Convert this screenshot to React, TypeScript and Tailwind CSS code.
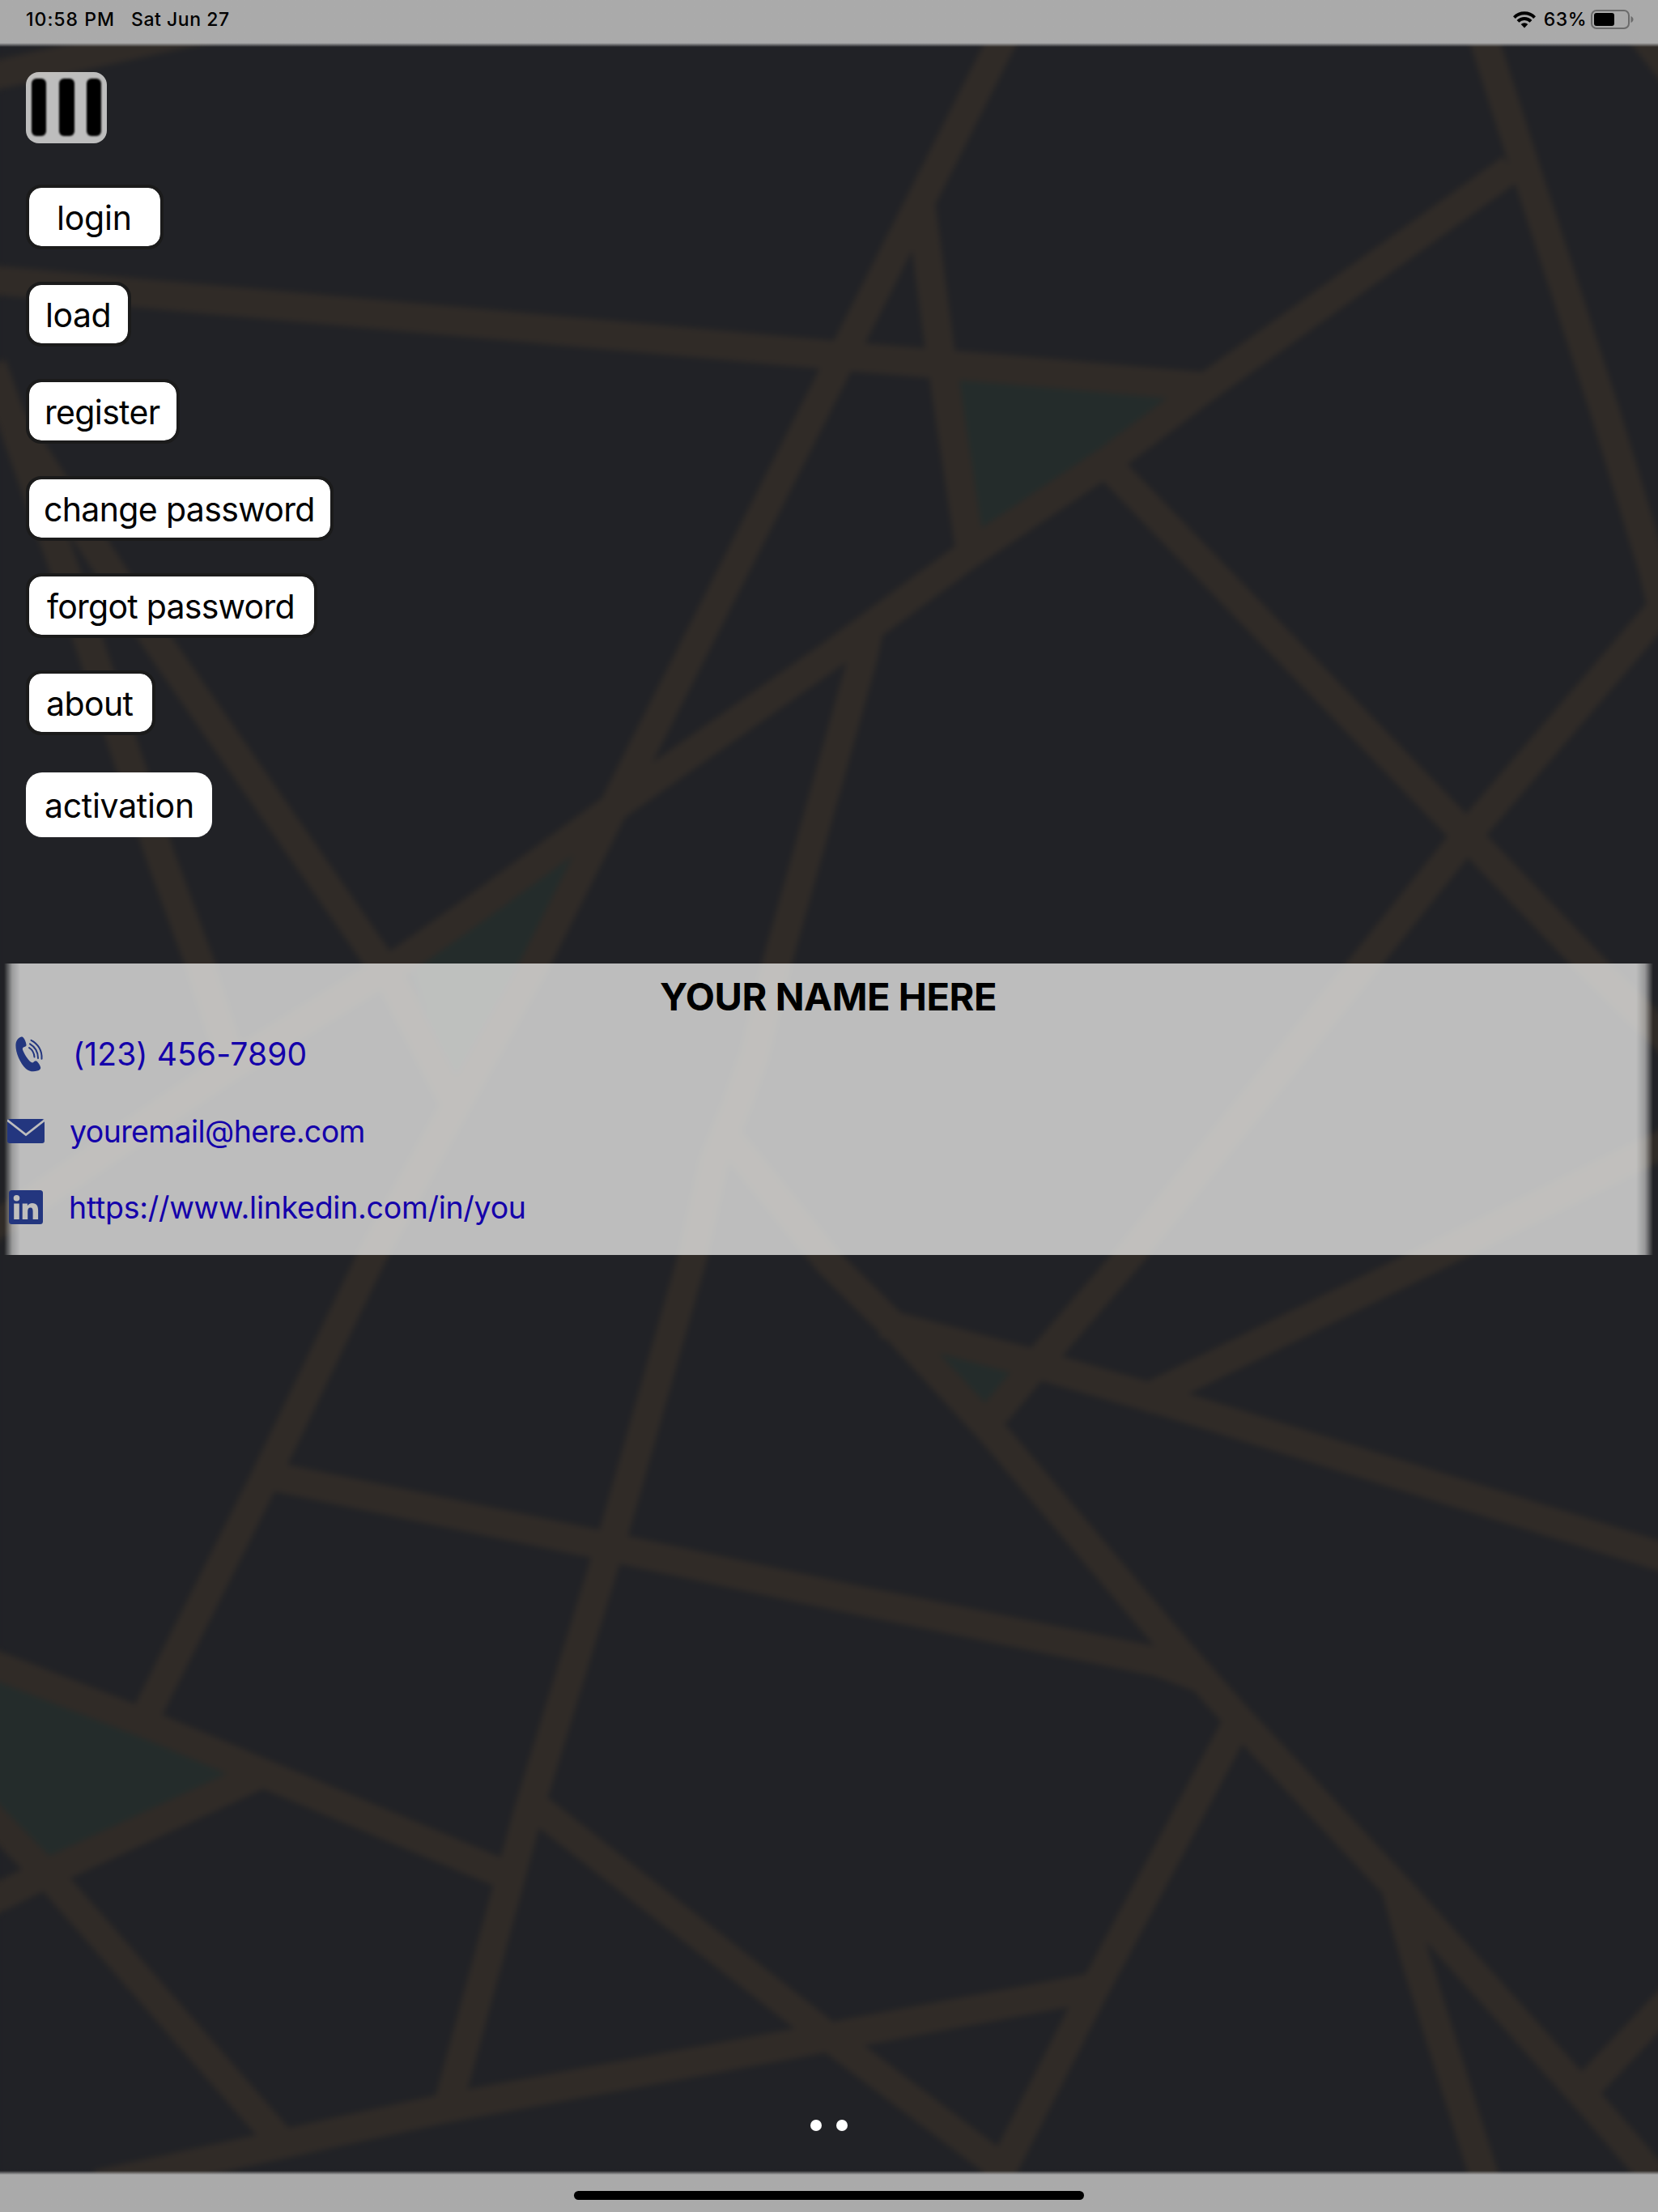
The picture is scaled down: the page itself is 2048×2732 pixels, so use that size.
const ROADS = [
  "-20,96 155,57 260,34",
  "-20,345 520,393 1044,440 1250,457 1490,478",
  "1256,14 1234,57 1140,243 1051,419 784,945 661,1190 560,1370 460,1550 330,1820 182,2115",
  "1137,250 1161,432 1200,690",
  "1867,208 1490,478 1370,568 1200,682 1024,811 760,996 588,1122 503,1182 437,1223 277,1322 45,1480 0,1510 -40,1535",
  "1367,573 1811,1031 1971,1198 2080,1305",
  "1824,20 1880,195 1984,513 2041,700 2052,745",
  "2058,745 1811,1033 1687,1188 1396,1550 1285,1679 1228,1747",
  "2020,32 2070,95",
  "-45,424 81,620 191,788 457,1171 486,1215 560,1360",
  "-10,450 81,707 108,788 199,1060 246,1188 285,1310",
  "1075,770 1066,811 960,1188 932,1303 908,1370 882,1434 856,1550 758,1894 653,2236 553,2602",
  "895,1400 1024,1559 1109,1643 1226,1769 1449,2032 1527,2120 1729,2335 1965,2598 2045,2690",
  "1090,1634 1298,1690 1442,1732 2070,1928",
  "1410,1730 1772,1552 2070,1405",
  "330,1822 751,1910 1024,1969 1429,2052 1490,2075",
  "-20,2051 183,2130 313,2185 620,2314",
  "320,2192 65,2310 -20,2352",
  "-20,2235 65,2322 350,2648",
  "665,2234 1024,2516 1250,2687",
  "120,2698 222,2676 340,2650 549,2604 1024,2516 1350,2455",
  "1527,2130 1350,2460 1225,2705",
  "1725,2335 1749,2421 1840,2710",
  "1955,2583 2070,2462",
];

const PARKS = [
  "1161,445 1470,473 1200,679",
  "757,1000 503,1182 560,1365 661,1190",
  "1110,1650 1280,1690 1228,1747",
  "-10,2052 300,2185 65,2310 -10,2240",
];

function MapBackdrop() {
  return (
    <svg className="absolute inset-0 h-full w-full" viewBox="0 0 2048 2732" aria-hidden="true">
      <defs>
        <filter id="soften" x="0" y="0" width="2048" height="2732" filterUnits="userSpaceOnUse" colorInterpolationFilters="sRGB">
          <feGaussianBlur stdDeviation="3.5" />
        </filter>
      </defs>
      <g filter="url(#soften)">
        <rect width="2048" height="2732" fill="#212226" />
        {PARKS.map((p) => (
          <polygon key={p} points={p} fill="#242c2b" />
        ))}
        {ROADS.map((p) => (
          <polyline key={p} points={p} fill="none" stroke="#302b27" strokeWidth="36" strokeLinejoin="round" />
        ))}
      </g>
    </svg>
  );
}

function StatusBar() {
  return (
    <header className="flex h-[58px] shrink-0 items-start bg-linear-to-b from-[#aaaaaa] from-[53px] to-transparent to-[58px] pr-[30px] pl-[32px] text-[23px] leading-[48px] font-medium">
      <span className="w-[130px] tracking-[1px]">10:58 PM</span>
      <span className="tracking-[0.55px]">Sat Jun 27</span>
      <div className="ml-auto flex h-12 items-center">
        <svg className="mr-[10px] h-[21px] w-[28px]" viewBox="0 0 28 21">
          <g fill="none" stroke="#000" strokeWidth="4">
            <path d="M1.4 7.6a17.8 17.8 0 0 1 25.2 0" />
            <path d="M6 12.3a11.3 11.3 0 0 1 16 0" />
          </g>
          <path d="M14 20.4l-4.3-4.4a6.1 6.1 0 0 1 8.6 0z" />
        </svg>
        <span className="mr-[5px] tracking-[0.5px]">63%</span>
        <svg className="h-6 w-[53px]" viewBox="0 0 53 24">
          <rect x="1" y="1" width="46" height="22" rx="6" fill="none" stroke="#6b6b6b" strokeWidth="2" />
          <rect x="4" y="4" width="25" height="16" rx="3" />
          <path d="M49.5 8c4 1.500 4 6.500 0 8z" fill="#6b6b6b" />
        </svg>
      </div>
    </header>
  );
}

const OUTLINED =
  "flex h-20 items-center rounded-[19px] border-4 border-[#1b1b1b] bg-white bg-clip-padding pt-[4px] text-[41px] whitespace-nowrap";

function Menu() {
  return (
    <nav className="flex flex-col items-start gap-10 pl-8">
      <button className={`${OUTLINED} w-[170px] pl-[34px] tracking-[-0.2px]`}>login</button>
      <button className={`${OUTLINED} w-[130px] pl-[20px] tracking-[-0.5px]`}>load</button>
      <button className={`${OUTLINED} w-[190px] pl-[19px] tracking-[-0.65px]`}>register</button>
      <button className={`${OUTLINED} w-[380px] pl-[18px] tracking-[-0.65px]`}>change password</button>
      <button className={`${OUTLINED} w-[360px] pl-[22px] tracking-[-0.75px]`}>forgot password</button>
      <button className={`${OUTLINED} w-[160px] pl-[21px] tracking-[-0.6px]`}>about</button>
      <button className="mt-[6px] flex h-20 w-[230px] items-center rounded-[20px] bg-white pt-[4px] pl-[23px] text-[41px] tracking-[-0.3px]">
        activation
      </button>
    </nav>
  );
}

function PhoneIcon() {
  return (
    <svg className="h-[44px] w-[35px]" viewBox="0 0 35 44" fill="#23367f">
      <path d="M7.500.6C3.500 1.600.5 5.500.4 11c-.2 9 5.500 22.500 12.600 29 4 3.600 9.500 4 14 2.600 2.600-.9 4.600-2.300 4.200-4.200-.8-2.800-2.500-5.500-4.600-7.600-1.200-1-2.300-.8-3.300.3-1.200 1.600-2.500 1.800-4.100.7C15.200 28.800 10.500 21 9 16.500c-.5-2 .2-3 2.200-3.500 1.800-.5 2.500-1.200 2.300-2.700-.5-3.600-1.800-6.600-3.700-8.900C9.100.6 8.400.4 7.500.6z" />
      <g fill="none" stroke="#23367f" strokeWidth="2" strokeLinecap="round">
        <path d="M17 14c3.800 2.500 6.200 6.500 6.500 11.500" />
        <path d="M18 9.300c5.500 3.200 10 9 10 17.700" />
        <path d="M19.500 4.800c8 4 13.700 12.500 13 23" />
      </g>
    </svg>
  );
}

function MailIcon() {
  return (
    <svg className="h-[30px] w-[46px]" viewBox="0 0 46 30">
      <rect width="46" height="30" rx="3" fill="#23367f" />
      <path d="M0 1.500L23 19.500 46 1.500" fill="none" stroke="#bebebe" strokeWidth="2.800" />
    </svg>
  );
}

function LinkedInIcon() {
  return (
    <svg className="h-[42px] w-[42px]" viewBox="0 0 42 42">
      <rect width="42" height="42" rx="3.500" fill="#23367f" />
      <g fill="#c0bfbd">
        <circle cx="9.500" cy="9.800" r="3.800" />
        <path d="M6.200 16.500h6.600V36H6.200zM16.700 16.500h6.200v2.700c1.100-1.900 3.200-3.200 6-3.200 5.500 0 7.200 3.600 7.200 8.800V36h-6.500v-9.800c0-2.800-.6-4.800-3-4.800s-3.400 1.900-3.400 4.800V36h-6.500z" />
      </g>
    </svg>
  );
}

function ContactCard() {
  return (
    <section className="relative mt-[156px] h-[360px] shrink-0">
      <div className="absolute inset-0 bg-[rgba(241,241,240,0.75)] [mask-image:linear-gradient(to_right,transparent_5px,rgba(0,0,0,.78)_15px,black_25px,black_2021px,rgba(0,0,0,.75)_2032px,transparent_2042px)]" />
      <div className="relative">
        <h1 className="h-[90px] pt-[11px] pr-[2px] text-center text-[47px] leading-[60px] font-bold tracking-[-0.45px]">YOUR NAME HERE</h1>
        <ul className="text-[#1400aa]">
          <li className="flex h-[44px] items-center pl-[19px]">
            <PhoneIcon />
            <a className="ml-[36px] text-[39px] leading-[44px] tracking-[0.1px]">(123) 456-7890</a>
          </li>
          <li className="mt-[51px] flex h-[44px] items-center pl-[9px]">
            <MailIcon />
            <a className="ml-[31px] pt-[2px] text-[37.5px] leading-[44px] tracking-[-0.6px]">youremail@here.com</a>
          </li>
          <li className="mt-[50px] flex h-[44px] items-center pl-[11px]">
            <LinkedInIcon />
            <a className="ml-[32px] pt-[2px] text-[37.5px] leading-[44px] tracking-[-0.28px]">https://www.linkedin.com/in/you</a>
          </li>
        </ul>
      </div>
    </section>
  );
}

export default function App() {
  return (
    <div className="relative h-[2732px] w-[2048px] overflow-hidden bg-[#212226] font-['Inter','Liberation_Sans',sans-serif] text-black">
      <MapBackdrop />
      <div className="relative flex h-full flex-col">
        <StatusBar />
        <button className="mt-[31px] mb-[51px] ml-8 flex h-[88px] w-[100px] items-start gap-[15.5px] rounded-[16px] bg-[rgba(241,241,240,0.75)] pt-[8px] pl-[7px]">
          <i className="h-[71px] w-[18px] rounded-[6px] bg-black blur-[1px]" />
          <i className="h-[71px] w-[19px] rounded-[6px] bg-black blur-[1px]" />
          <i className="h-[71px] w-[18px] rounded-[6px] bg-black blur-[1px]" />
        </button>
        <Menu />
        <ContactCard />
        <div className="mt-auto mb-[49px] flex justify-center gap-[18px]">
          <span className="size-[14px] rounded-full bg-white" />
          <span className="size-[14px] rounded-full bg-white" />
        </div>
        <footer className="flex h-[51px] shrink-0 justify-center bg-linear-to-b from-transparent to-[#aaaaaa] to-[5px] pt-[25px]">
          <div className="h-[11px] w-[630px] rounded-full bg-black" />
        </footer>
      </div>
    </div>
  );
}
